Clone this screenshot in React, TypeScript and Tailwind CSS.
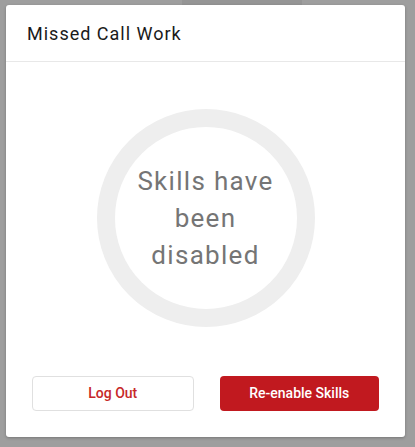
export default function App() {
  return (
    <div
      className="relative w-[415px] h-[447px] bg-[#9e9e9e] overflow-hidden"
      style={{ fontFamily: "Roboto, 'Liberation Sans', sans-serif" }}
    >
      <div className="absolute left-[182px] top-0 w-[120px] h-[5px] bg-[#959595]" />
      <div className="relative ml-[6px] mt-[5px] w-[399px] h-[432px] bg-white rounded-[3px] shadow-[0_1px_3px_rgba(0,0,0,0.25)] flex flex-col">
        {/* Header */}
        <div className="h-[57px] border-b border-[#e8e8e8] flex items-center px-[21px]">
          <h1 className="text-[18px] tracking-[1px] text-[#1a1a1a] pt-[1px]">Missed Call Work</h1>
        </div>

        {/* Status ring */}
        <div className="flex justify-center pt-[47px]">
          <div className="w-[218px] h-[218px] rounded-full border-[18px] border-[#eeeeee] flex items-center justify-center">
            <p className="text-[26px] leading-[37px] tracking-[1.3px] text-[#757575] text-center">
              Skills have
              <br />
              been
              <br />
              disabled
            </p>
          </div>
        </div>

        {/* Actions */}
        <div className="flex gap-[26px] px-[26px] mt-[49px]">
          <button className="flex-1 h-[35px] rounded-[4px] border border-[#e0e0e0] bg-white text-[14px] font-medium text-[#c62828]">
            Log Out
          </button>
          <button className="flex-1 h-[35px] rounded-[4px] bg-[#c1191f] text-[14px] font-medium text-white">
            Re-enable Skills
          </button>
        </div>
      </div>
    </div>
  );
}
